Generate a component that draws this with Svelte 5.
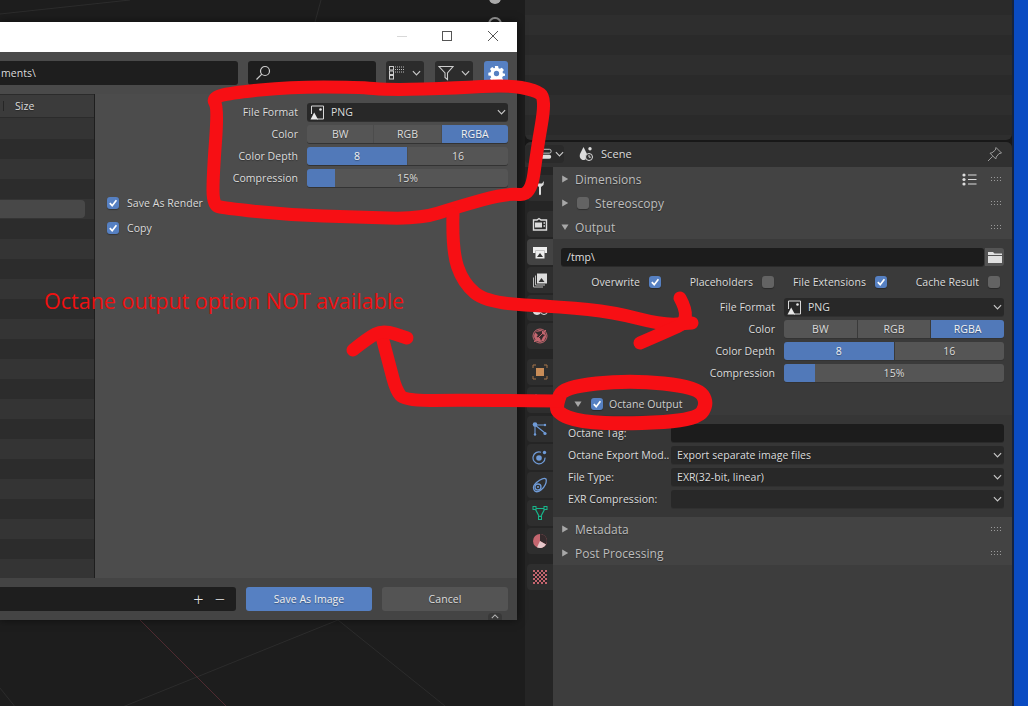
<script>
  function smooth(pts, closed = false) {
    const n = pts.length;
    const mid = (a, b) => [(a[0] + b[0]) / 2, (a[1] + b[1]) / 2];
    if (closed) {
      const s = mid(pts[n - 1], pts[0]);
      let d = `M${s[0]} ${s[1]}`;
      for (let i = 0; i < n; i++) {
        const m = mid(pts[i], pts[(i + 1) % n]);
        d += ` Q${pts[i][0]} ${pts[i][1]} ${m[0]} ${m[1]}`;
      }
      return d + 'Z';
    }
    let d = `M${pts[0][0]} ${pts[0][1]}`;
    for (let i = 1; i < n - 1; i++) {
      const m = mid(pts[i], pts[i + 1]);
      d += ` Q${pts[i][0]} ${pts[i][1]} ${m[0]} ${m[1]}`;
    }
    return d + ` L${pts[n - 1][0]} ${pts[n - 1][1]}`;
  }

  const box = smooth([[212,98],[230,93],[290,87],[357,87],[390,90],[457,88],[507,85],[535,90],[546,98],[537,150],[531,196],[507,193],[457,207],[420,219],[357,217],[290,215],[223,208],[213,205],[213,175],[218,108]], true);
  const link = smooth([[453,214],[452,250],[463,283],[487,303],[563,307],[613,312],[663,325],[692,323]]);
  const head = smooth([[680,298],[692,320],[663,333],[640,343]]);
  const ring = smooth([[557,403],[563,387],[630,380],[697,387],[708,403],[697,420],[630,424],[580,422],[557,413]], true);
  const back = smooth([[557,401],[463,400],[405,401],[396,390],[390,367],[381,333]]);
  const head2 = smooth([[353,350],[368,338],[383,330],[407,338]]);

  const listRows = Array.from({ length: 23 }, (_, i) => i);
  const outlinerRows = Array.from({ length: 8 }, (_, i) => i);
</script>

{#snippet check(on)}
  <span class="cb" class:on>
    {#if on}
      <svg viewBox="0 0 12 12" width="12" height="12"><path d="M2.8 6.2 5.2 8.7 9.4 3.3" fill="none" stroke="#fff" stroke-width="1.7" /></svg>
    {/if}
  </span>
{/snippet}

{#snippet chev()}
  <svg class="chev" viewBox="0 0 10 6" width="9" height="6"><path d="M1 1 5 5 9 1" fill="none" stroke="#c8c8c8" stroke-width="1.3" /></svg>
{/snippet}

{#snippet imgIcon()}
  <svg class="img" viewBox="0 0 15 15" width="15" height="15">
    <path d="M3 1h10.5v13H7M3 1H1.5v8" fill="none" stroke="#d8d8d8" stroke-width="1" />
    <circle cx="10.5" cy="4.5" r="1.3" fill="#e8e8e8" />
    <path d="M0.5 14.5 4.2 7.5 8 14.5Z" fill="#e8e8e8" />
  </svg>
{/snippet}

{#snippet fmt()}
  <div class="fmt">
    <span class="lab">File Format</span>
    <div class="drop">{@render imgIcon()}<span class="dt">PNG</span>{@render chev()}</div>
    <span class="lab">Color</span>
    <div class="seg"><span>BW</span><span>RGB</span><span class="act">RGBA</span></div>
    <span class="lab">Color Depth</span>
    <div class="seg"><span class="act">8</span><span>16</span></div>
    <span class="lab">Compression</span>
    <div class="slider"><span class="fill"></span><span class="val">15%</span></div>
  </div>
{/snippet}

{#snippet grip()}
  <svg class="grip" viewBox="0 0 11 5" width="11" height="5">
    <g fill="#9a9a9a"><rect x="0" y="0" width="1" height="1" /><rect x="3" y="0" width="1" height="1" /><rect x="6" y="0" width="1" height="1" /><rect x="9" y="0" width="1" height="1" /><rect x="0" y="3" width="1" height="1" /><rect x="3" y="3" width="1" height="1" /><rect x="6" y="3" width="1" height="1" /><rect x="9" y="3" width="1" height="1" /></g>
  </svg>
{/snippet}

{#snippet tri(open)}
  <svg class="tri" viewBox="0 0 8 8" width="8" height="8">
    {#if open}<path d="M0.5 1.5H7.5L4 7Z" fill="#a8a8a8" />{:else}<path d="M1.2 0.5V7.5L7.2 4Z" fill="#a8a8a8" />{/if}
  </svg>
{/snippet}

<div class="screen">
  <div class="viewport">
    <svg class="grid3d" viewBox="0 0 525 706" width="525" height="706">
      <g stroke="#2c2c2c" fill="none">
        <path d="M315 22 321 0M0 14 130 0M120 708 338 620 445 706M0 688 16 708" />
      </g>
      <path d="M140 620 228 708" stroke="#4f2a30" fill="none" />
      <circle cx="495" cy="-2" r="6" fill="#aaa" />
      <circle cx="495" cy="24" r="6" fill="none" stroke="#999" stroke-width="2" />
    </svg>
  </div>

  <div class="center">
    <div class="outliner">
      {#each outlinerRows as r}<div class="orow"></div>{/each}
    </div>

    <div class="props">
      <div class="phdr">
        <div class="edsel">
          <svg viewBox="0 0 14 14" width="14" height="14">
            <rect x="1" y="1.5" width="12" height="4.5" rx="2" fill="none" stroke="#ddd" />
            <rect x="1" y="8" width="12" height="4.5" rx="2" fill="#ddd" />
          </svg>
          {@render chev()}
        </div>
        <svg class="sceneic" viewBox="0 0 15 14" width="15" height="14">
          <path d="M4.500 0 8 7C9 10.500 7 13 4.500 13S0 10.500 1 7Z" fill="#ddd" />
          <circle cx="11" cy="1.800" r="1.700" fill="#ddd" />
          <circle cx="10" cy="10" r="3.500" fill="#303030" stroke="#ddd" />
          <path d="M10 8V10.200H11.800" stroke="#ddd" fill="none" />
        </svg>
        <span class="scene">Scene</span>
        <svg class="pin" viewBox="0 0 16 16" width="16" height="16">
          <path d="M1 15 5.6 10.4M9 1.5 14.5 7 12 7.6 9.2 11 8.8 13 3 7.2 5 6.8 8.4 4Z" fill="none" stroke="#9c9c9c" />
        </svg>
      </div>

      <div class="pbody">
        <div class="tabs">
          <div class="tab wrench">
            <svg viewBox="0 0 16 16" width="16" height="16"><path d="M4 1 4.5 5 7 7V14C7 15.5 9 15.5 9 14V7L11.5 5 12 1 10 3.5H6Z" fill="#ddd" /></svg>
          </div>
          <div class="tab gap1">
            <svg viewBox="0 0 16 16" width="16" height="16"><path d="M1.5 4H5L7 2.5 9 4H14.5V14H1.5Z" fill="none" stroke="#ddd" stroke-width="1.4" /><path d="M3 6.5H10V11.5H3Z" fill="#ddd" /><path d="M11.5 7H13M11.5 10H13" stroke="#ddd" stroke-width="1.4" /></svg>
          </div>
          <div class="tab active">
            <svg viewBox="0 0 16 16" width="16" height="16"><path d="M1 3H15V9H12.5V6.5H3.5V9H1Z" fill="#eee" /><path d="M3.5 6.5H12.5V14.5H3.5Z" fill="#eee" /><path d="M5 13 8 9 11 13Z" fill="#333" /></svg>
          </div>
          <div class="tab">
            <svg viewBox="0 0 16 16" width="16" height="16"><rect x="5" y="1.5" width="10" height="10" fill="#ddd" /><path d="M6.5 10 9.5 6 12.5 10Z" fill="#333" /><path d="M3.5 3.5V13H13M1.5 5.5V15H11" fill="none" stroke="#bbb" /></svg>
          </div>
          <div class="tab">
            <svg viewBox="0 0 16 16" width="16" height="16"><path d="M5 2 9 9C10 12 8 15 5 15S0 12 1 9Z" fill="#ddd" /><circle cx="12" cy="11" r="3.5" fill="none" stroke="#ddd" /></svg>
          </div>
          <div class="tab">
            <svg viewBox="0 0 16 16" width="16" height="16"><circle cx="8" cy="8" r="6" fill="#c4666f" /><circle cx="8" cy="8" r="7" fill="none" stroke="#c4666f" /><path d="M3 4 6 7 4.5 9 8 10 9 13 11 9 13 7 10 6 10 3Z" fill="#352a2c" /><path d="M2 14 14 2" stroke="#c4666f" /></svg>
          </div>
          <div class="tab gap2">
            <svg viewBox="0 0 16 16" width="16" height="16"><rect x="4" y="4" width="8" height="8" fill="#c98d58" /><path d="M1 4V1H4M12 1H15V4M15 12V15H12M4 15H1V12" fill="none" stroke="#a5754a" /></svg>
          </div>
          <div class="tab">
            <svg viewBox="0 0 16 16" width="16" height="16"><path d="M4 2 7 6 13 13 11 14 5 8 2 5Z" fill="#6f9bd8" /></svg>
          </div>
          <div class="tab gap3">
            <svg viewBox="0 0 16 16" width="16" height="16"><path d="M3 4 13 12M3 4H13M3 4V13" stroke="#6f9bd8" stroke-width="1.1" fill="none" /><circle cx="3" cy="3.5" r="2.3" fill="#6f9bd8" /><circle cx="13" cy="4" r="1.2" fill="#6f9bd8" /><circle cx="3" cy="13.5" r="1.2" fill="#6f9bd8" /><circle cx="13" cy="12.5" r="1.6" fill="#6f9bd8" /></svg>
          </div>
          <div class="tab">
            <svg viewBox="0 0 16 16" width="16" height="16"><circle cx="7" cy="9" r="2.8" fill="#6f9bd8" /><path d="M9 3.2A6 6 0 1 0 13 8.6" fill="none" stroke="#6f9bd8" stroke-width="1.2" /><circle cx="12.5" cy="3.5" r="1.7" fill="#6f9bd8" /></svg>
          </div>
          <div class="tab">
            <svg viewBox="0 0 16 16" width="16" height="16"><path d="M14 2C15 5 13 10 9 13S2 15 1.5 11 5 5 8 3 13 1 14 2Z" fill="none" stroke="#6f9bd8" stroke-width="1.3" /><circle cx="6" cy="10" r="3" fill="none" stroke="#6f9bd8" stroke-width="1.3" /><circle cx="6" cy="10" r="1" fill="#6f9bd8" /></svg>
          </div>
          <div class="tab">
            <svg viewBox="0 0 16 16" width="16" height="16"><path d="M3 3.5H13L8 13Z" fill="none" stroke="#18b48a" stroke-width="1.2" /><rect x="1" y="1.5" width="3" height="3" fill="#2d2d2d" stroke="#18b48a" /><rect x="12" y="1.5" width="3" height="3" fill="#2d2d2d" stroke="#18b48a" /><rect x="6.5" y="11.5" width="3" height="3" fill="#2d2d2d" stroke="#18b48a" /></svg>
          </div>
          <div class="tab">
            <svg viewBox="0 0 16 16" width="16" height="16"><circle cx="8" cy="8" r="7" fill="#c4666f" /><path d="M8 8V1A7 7 0 0 1 14 11.5Z" fill="#352a2c" /><path d="M8 8 14 11.5A7 7 0 0 1 5 14.3Z" fill="#e6c7ca" /></svg>
          </div>
          <div class="tab gap4">
            <svg viewBox="0 0 14 14" width="14" height="14">
              <rect width="14" height="14" fill="#c4666f" />
              <path d="M2 0h2v2H2zM6 0h2v2H6zM10 0h2v2h-2zM0 2h2v2H0zM4 2h2v2H4zM8 2h2v2H8zM12 2h2v2h-2zM2 4h2v2H2zM6 4h2v2H6zM10 4h2v2h-2zM0 6h2v2H0zM4 6h2v2H4zM8 6h2v2H8zM12 6h2v2h-2zM2 8h2v2H2zM6 8h2v2H6zM10 8h2v2h-2zM0 10h2v2H0zM4 10h2v2H4zM8 10h2v2H8zM12 10h2v2h-2zM2 12h2v2H2zM6 12h2v2H6zM10 12h2v2h-2z" fill="#2a2426" />
            </svg>
          </div>
        </div>

        <div class="pscroll">
          <div class="ph">
            {@render tri(false)}<span class="pt">Dimensions</span>
            <svg class="presets" viewBox="0 0 15 13" width="15" height="13"><g fill="#ddd"><circle cx="2" cy="2" r="1.6" /><circle cx="2" cy="6.5" r="1.6" /><circle cx="2" cy="11" r="1.6" /><rect x="6" y="1.5" width="8.5" height="1" /><rect x="6" y="6" width="8.5" height="1" /><rect x="6" y="10.500" width="8.5" height="1" /></g></svg>
            {@render grip()}
          </div>
          <div class="ph">
            {@render tri(false)}{@render check(false)}<span class="pt">Stereoscopy</span>
            {@render grip()}
          </div>
          <div class="ph">
            {@render tri(true)}<span class="pt">Output</span>
            {@render grip()}
          </div>
          <div class="pc">
            <div class="pathrow">
              <div class="txt">/tmp\</div>
              <div class="folder">
                <svg viewBox="0 0 14 12" width="14" height="12"><path d="M0 1H5L6.500 2.500H14V4H0ZM0 5H14V12H0Z" fill="#e0e0e0" /></svg>
              </div>
            </div>
            <div class="checks">
              <div class="ck"><span>Overwrite</span>{@render check(true)}</div>
              <div class="ck"><span>Placeholders</span>{@render check(false)}</div>
              <div class="ck"><span>File Extensions</span>{@render check(true)}</div>
              <div class="ck"><span>Cache Result</span>{@render check(false)}</div>
            </div>
            {@render fmt()}
            <div class="subh">
              {@render tri(true)}{@render check(true)}<span>Octane Output</span>
            </div>
            <div class="subc">
              <span class="ol">Octane Tag:</span>
              <div class="txt"></div>
              <span class="ol">Octane Export Mod..</span>
              <div class="drop"><span class="dt">Export separate image files</span>{@render chev()}</div>
              <span class="ol">File Type:</span>
              <div class="drop"><span class="dt">EXR(32-bit, linear)</span>{@render chev()}</div>
              <span class="ol">EXR Compression:</span>
              <div class="drop"><span class="dt"></span>{@render chev()}</div>
            </div>
          </div>
          <div class="ph">
            {@render tri(false)}<span class="pt">Metadata</span>
            {@render grip()}
          </div>
          <div class="ph">
            {@render tri(false)}<span class="pt">Post Processing</span>
            {@render grip()}
          </div>
        </div>
      </div>
    </div>
  </div>

  <div class="desktop"></div>

  <div class="dialog">
    <div class="title">
      <svg viewBox="0 0 120 12" width="120" height="12">
        <path d="M0 6.500H10" stroke="#d8d8d8" />
        <rect x="45.500" y="1.500" width="9" height="9" fill="none" stroke="#555" />
        <path d="M91 1 101 11M101 1 91 11" stroke="#555" />
      </svg>
    </div>
    <div class="toolbar">
      <div class="inp path"><span>ments\</span></div>
      <div class="inp search">
        <svg viewBox="0 0 16 16" width="16" height="16"><circle cx="10" cy="6" r="4.500" fill="none" stroke="#ccc" stroke-width="1.2" /><path d="M6.800 9.200 1.500 14.500" stroke="#ccc" stroke-width="1.2" /></svg>
      </div>
      <div class="tb">
        <svg viewBox="0 0 16 16" width="16" height="16" class="tbi">
          <g fill="none" stroke="#ccc"><rect x="0.500" y="1.500" width="4" height="3.500" /><rect x="0.500" y="6" width="4" height="3.500" /><rect x="0.500" y="10.500" width="4" height="3.500" /></g>
          <path d="M6 2H15M6 4.500H15M6 7H15" stroke="#bbb" stroke-dasharray="1 1" />
        </svg>
        {@render chev()}
      </div>
      <div class="tb">
        <svg viewBox="0 0 16 16" width="16" height="16" class="tbi"><path d="M1 1.500H15L9.500 8V14.500L7 12.500V8Z" fill="none" stroke="#ccc" stroke-width="1.1" /></svg>
        {@render chev()}
      </div>
      <div class="gear">
        <svg viewBox="0 0 16 16" width="17" height="17"><path fill="#fff" fill-rule="evenodd" d="M6.500 1H9.500L9.900 3 11.200 3.600 13 2.500 15 4.800 13.700 6.400 14 7.800 16 8.300V10L14 10.700 13.300 12 14.300 13.800 12 15.500 10.500 14 9.200 14.300 8.800 16H7L6.700 14.300 5.300 13.800 3.800 15 1.800 13 3 11.500 2.400 10.100 0.300 9.800V7.200L2.400 6.800 3 5.400 1.800 3.800 4 1.800 5.500 3 6.600 2.800ZM8 5.500A2.500 2.500 0 1 0 8 10.500 2.500 2.500 0 1 0 8 5.500Z" /></svg>
      </div>
    </div>
    <div class="dbody">
      <div class="list">
        <div class="lhead"><span>Size</span></div>
        {#each listRows as r}<div class="lrow" class:sel={r === 4}></div>{/each}
      </div>
      <div class="side">
        {@render fmt()}
        <div class="opts">
          <div class="opt">{@render check(true)}<span>Save As Render</span></div>
          <div class="opt">{@render check(true)}<span>Copy</span></div>
        </div>
      </div>
    </div>
    <div class="bar">
      <div class="inp name"><span class="pm">+</span><span class="pm">−</span></div>
      <div class="btn primary">Save As Image</div>
      <div class="btn">Cancel</div>
      <div class="handle">
        <svg viewBox="0 0 10 6" width="8" height="5"><path d="M1 5 5 1 9 5" fill="none" stroke="#b5b5b5" stroke-width="1.3" /></svg>
      </div>
    </div>
  </div>

  <svg class="marks" viewBox="0 0 1028 706" width="1028" height="706">
    <g fill="none" stroke="#f70f14" stroke-width="13" stroke-linecap="round" stroke-linejoin="round">
      <path d={box} />
      <path d={link} />
      <path d={head} />
      <path d={ring} stroke-width="14" />
      <path d={back} />
      <path d={head2} />
    </g>
  </svg>
  <div class="note">Octane output option NOT available</div>
</div>

<style>
  :global(body) {
    margin: 0;
  }
  .screen {
    position: relative;
    width: 1028px;
    height: 706px;
    overflow: hidden;
    display: grid;
    grid-template-columns: 525px 487px 16px;
    background: #1d1d1d;
    font-family: "Open Sans", sans-serif;
    font-size: 10.5px;
    letter-spacing: 0.05px;
    color: #dcdcdc;
    text-shadow: 0 1px 1px rgba(0, 0, 0, 0.35);
  }
  .viewport {
    background: #1d1d1d;
    overflow: hidden;
  }
  .grid3d {
    display: block;
  }
  .center {
    display: flex;
    flex-direction: column;
    gap: 2px;
    min-height: 0;
    background: #181818;
  }
  .desktop {
    background: #0a4bc2;
    border-left: 2px solid #15233f;
  }
  .outliner {
    height: 140px;
    overflow: hidden;
    border-radius: 0 0 6px 6px;
    flex: none;
  }
  .orow {
    height: 20px;
    background: #2e2e2e;
  }
  .orow:nth-child(odd) {
    background: #2a2a2a;
  }
  .orow:first-child {
    height: 15px;
  }
  .props {
    flex: 1;
    display: flex;
    flex-direction: column;
    min-height: 0;
    background: #2c2c2c;
    border-radius: 6px 6px 0 0;
    overflow: hidden;
  }
  .phdr {
    height: 25px;
    flex: none;
    box-sizing: border-box;
    padding-bottom: 2px;
    display: flex;
    align-items: center;
    background: #303030;
  }
  .edsel {
    width: 39px;
    height: 18px;
    box-sizing: border-box;
    display: flex;
    align-items: center;
    gap: 3px;
    padding-left: 15px;
    background: #2a2a2a;
    border-radius: 4px;
  }
  .sceneic {
    margin-left: 15px;
    margin-right: 7px;
  }
  .scene {
    font-size: 11px;
  }
  .pin {
    margin-left: auto;
    margin-right: 9px;
  }
  .pbody {
    flex: 1;
    display: flex;
    min-height: 0;
  }
  .tabs {
    width: 28px;
    flex: none;
    box-sizing: border-box;
    padding: 8px 0 0 2px;
    display: flex;
    flex-direction: column;
    gap: 2px;
    background: #252525;
  }
  .tab {
    height: 26px;
    flex: none;
    display: flex;
    align-items: center;
    justify-content: center;
    background: #2e2e2e;
    border-radius: 4px 0 0 4px;
  }
  .tab.active {
    background: #434343;
  }
  .tab.gap1 {
    margin-top: 8px;
  }
  .tab.gap2 {
    margin-top: 8px;
  }
  .tab.gap3 {
    margin-top: 1px;
  }
  .tab.gap4 {
    margin-top: 8px;
  }
  .pscroll {
    flex: 1;
    min-width: 0;
    background: #3d3d3d;
  }
  .ph {
    height: 24px;
    display: flex;
    align-items: center;
    background: #434343;
    padding: 0 10px 0 8px;
    color: #bdbdbd;
  }
  .tri {
    flex: none;
  }
  .pt {
    margin-left: 6px;
    font-size: 12px;
  }
  .ph .cb {
    margin-left: 8px;
  }
  .presets {
    margin-left: auto;
    margin-right: 14px;
  }
  .grip {
    margin-left: auto;
  }
  .presets + .grip {
    margin-left: 0;
  }
  .pc {
    background: #3a3a3a;
  }
  .pathrow {
    display: flex;
    margin: 0 8px;
    padding-top: 9px;
    height: 18px;
    gap: 1px;
    box-sizing: content-box;
  }
  .txt {
    flex: 1;
    min-width: 0;
    background: #1c1c1c;
    border-radius: 3px;
    padding-left: 6px;
    line-height: 18px;
    box-shadow: 0 1px 0 #2a2a2a;
    color: #e0e0e0;
  }
  .folder {
    width: 19px;
    display: flex;
    align-items: center;
    justify-content: center;
    background: #545454;
    border-radius: 0 3px 3px 0;
  }
  .checks {
    display: grid;
    grid-template-columns: 103px 113px 113px 113px;
    margin: 7px 8px 0;
    height: 18px;
  }
  .ck {
    display: flex;
    align-items: center;
    justify-content: flex-end;
    gap: 9px;
    padding-right: 3px;
    white-space: nowrap;
  }
  .cb {
    flex: none;
    width: 12px;
    height: 12px;
    border-radius: 3px;
    background: #636363;
    display: block;
    box-shadow: 0 1px 1px rgba(0, 0, 0, 0.3);
  }
  .cb.on {
    background: #5680c2;
  }
  .cb svg {
    display: block;
  }
  .fmt {
    display: grid;
    grid-auto-rows: 18px;
    row-gap: 4px;
    column-gap: 9px;
    align-items: center;
  }
  .pc .fmt {
    grid-template-columns: 1fr 220px;
    margin: 7px 8px 0;
  }
  .side .fmt {
    grid-template-columns: 1fr 201px;
    margin: 9px 9px 0 0;
  }
  .lab {
    text-align: right;
    white-space: nowrap;
  }
  .drop {
    height: 18px;
    display: flex;
    align-items: center;
    background: #282828;
    border-radius: 3px;
    padding: 0 2px 0 3px;
    box-shadow: 0 1px 0 #303030;
    min-width: 0;
  }
  .img {
    flex: none;
    margin-right: 6px;
  }
  .dt {
    flex: 1;
  }
  .chev {
    flex: none;
  }
  .seg {
    height: 18px;
    display: flex;
    gap: 1px;
    border-radius: 3px;
    overflow: hidden;
    box-shadow: 0 1px 0 #333;
  }
  .seg span {
    flex: 1;
    background: #555;
    text-align: center;
    line-height: 18px;
  }
  .seg span.act {
    background: #5179b9;
    color: #f2f2f2;
  }
  .slider {
    position: relative;
    height: 18px;
    background: #555;
    border-radius: 3px;
    overflow: hidden;
    box-shadow: 0 1px 0 #333;
    text-align: center;
    line-height: 18px;
  }
  .fill {
    position: absolute;
    left: 0;
    top: 0;
    bottom: 0;
    width: 14%;
    background: #5179b9;
  }
  .val {
    position: relative;
  }
  .subh {
    height: 23px;
    margin-top: 10px;
    display: flex;
    align-items: center;
    padding-left: 21px;
    color: #cfcfcf;
  }
  .subh .cb {
    margin-left: 9px;
  }
  .subh > span:last-child {
    margin-left: 6px;
  }
  .subc {
    background: #363636;
    padding: 9px 8px 9px 15px;
    display: grid;
    grid-template-columns: 1fr 333px;
    grid-auto-rows: 18px;
    row-gap: 4px;
    align-items: center;
  }
  .subc .txt {
    height: 18px;
    align-self: stretch;
  }
  .subc .dt {
    padding-left: 3px;
  }
  .ol {
    white-space: nowrap;
  }

  .dialog {
    position: absolute;
    left: 0;
    top: 22px;
    width: 517px;
    height: 598px;
    display: flex;
    flex-direction: column;
    background: #4c4c4c;
    box-shadow: 0 0 8px rgba(0, 0, 0, 0.55);
  }
  .title {
    height: 30px;
    flex: none;
    box-sizing: border-box;
    padding-bottom: 2px;
    background: #fff;
    display: flex;
    align-items: center;
    justify-content: flex-end;
  }
  .toolbar {
    height: 42px;
    flex: none;
    box-sizing: border-box;
    padding: 9px 9px 0 0;
    display: flex;
    align-items: flex-start;
    background: #4a4a4a;
  }
  .inp {
    height: 24px;
    background: #1e1e1e;
    border-radius: 3px;
    display: flex;
    align-items: center;
    box-sizing: border-box;
  }
  .path {
    width: 238px;
    padding-left: 1px;
    border-radius: 0 3px 3px 0;
  }
  .search {
    width: 128px;
    margin-left: 10px;
    padding-left: 7px;
  }
  .tb {
    width: 38px;
    height: 24px;
    margin-left: 10px;
    box-sizing: border-box;
    background: #2c2c2c;
    border-radius: 3px;
    display: flex;
    align-items: center;
    padding-left: 3px;
    gap: 7px;
  }
  .tb + .tb {
    margin-left: 11px;
  }
  .gear {
    width: 24px;
    height: 24px;
    margin-left: 11px;
    background: #5680c2;
    border-radius: 3px;
    display: flex;
    align-items: center;
    justify-content: center;
  }
  .dbody {
    flex: 1;
    display: flex;
    min-height: 0;
  }
  .list {
    width: 95px;
    flex: none;
    border-right: 1px solid #1e1e1e;
    box-sizing: border-box;
    overflow: hidden;
    background: #333;
  }
  .lhead {
    height: 24px;
    background: #3b3b3b;
    border-top: 1px solid #2b2b2b;
    border-bottom: 1px solid #2b2b2b;
    box-sizing: border-box;
    display: flex;
    align-items: center;
    padding-left: 15px;
    position: relative;
  }
  .lhead::before {
    content: "";
    position: absolute;
    left: 3px;
    top: 6px;
    bottom: 6px;
    width: 1px;
    background: #262626;
  }
  .lrow {
    height: 20px;
    background: #343434;
    position: relative;
  }
  .lrow:nth-child(odd) {
    background: #2c2c2c;
  }
  .lhead + .lrow {
    height: 21px;
  }
  .lrow.sel::after {
    content: "";
    position: absolute;
    left: -6px;
    right: 9px;
    top: 1px;
    bottom: 1px;
    background: #484848;
    border-radius: 4px;
  }
  .side {
    flex: 1;
    min-width: 0;
  }
  .opts {
    margin-top: 10px;
    padding-left: 12px;
    display: flex;
    flex-direction: column;
    gap: 13px;
  }
  .opt {
    height: 12px;
    display: flex;
    align-items: center;
    gap: 8px;
    white-space: nowrap;
  }
  .bar {
    position: relative;
    height: 42px;
    flex: none;
    box-sizing: border-box;
    padding: 9px 9px 0 0;
    display: flex;
    gap: 10px;
    background: #444;
  }
  .name {
    width: 236px;
    justify-content: flex-end;
    padding-right: 11px;
    gap: 11px;
    border-radius: 0 3px 3px 0;
  }
  .pm {
    font-size: 18px;
    font-weight: 300;
    line-height: 1;
    color: #e8e8e8;
  }
  .btn {
    width: 126px;
    height: 24px;
    background: #545454;
    border-radius: 3px;
    text-align: center;
    line-height: 24px;
  }
  .btn.primary {
    background: #5680c2;
    color: #f0f0f0;
  }
  .handle {
    position: absolute;
    right: 15px;
    bottom: 0;
    width: 14px;
    height: 7px;
    background: #383838;
    border-radius: 4px 4px 0 0;
    display: flex;
    align-items: center;
    justify-content: center;
  }
  .marks {
    position: absolute;
    left: 0;
    top: 0;
    pointer-events: none;
  }
  .note {
    position: absolute;
    left: 44px;
    top: 286px;
    font-size: 21.5px;
    letter-spacing: 0;
    line-height: 30px;
    color: #f01010;
    white-space: nowrap;
    text-shadow: none;
  }
</style>
